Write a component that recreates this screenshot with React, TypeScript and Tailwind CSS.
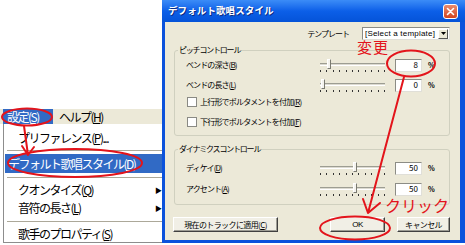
import React from "react";

const jp = "font-['Noto_Sans_CJK_JP','Noto_Sans',sans-serif]";

function Slider({ pos }: { pos: number }) {
  const ticks = Array.from({ length: 11 });
  return (
    <div className="relative w-[65px] h-[14px] shrink-0">
      <div className="absolute left-0 right-0 top-[5px] h-[3px] border-t border-[#9d9d92] border-b border-b-white bg-[#dcdad0]" />
      <div
        className="absolute top-[1px] w-[4px] h-[10px] bg-[#f4f3ee] border border-[#7a7a70] border-t-white border-l-white"
        style={{ left: pos }}
      />
      <div className="absolute left-0 right-0 bottom-0 h-[2px] flex justify-between">
        {ticks.map((_, i) => (
          <div key={i} className="w-px h-[2px] bg-[#333]" />
        ))}
      </div>
    </div>
  );
}

function Num({ v }: { v: string }) {
  return (
    <div className="ml-[10px] w-[27px] h-[13px] bg-white border border-[#8c8c85] border-b-[#e0dfd8] border-r-[#e0dfd8] flex items-center justify-end pr-[3px] text-[8px] leading-none">
      {v}
    </div>
  );
}

function Row({ label, pos, v }: { label: React.ReactNode; pos: number; v: string }) {
  return (
    <div className="flex items-center h-[14px] pl-[8px]">
      <div className="w-[134px] text-[8px] leading-none tracking-[-0.9px]">{label}</div>
      <Slider pos={pos} />
      <Num v={v} />
      <div className="ml-[6px] text-[7px] font-bold leading-none">%</div>
    </div>
  );
}

function Check({ label }: { label: React.ReactNode }) {
  return (
    <div className="flex items-center h-[12px] pl-[9px]">
      <div className="w-[10px] h-[10px] bg-white border border-[#8a8a84]" />
      <div className="ml-[3px] text-[8px] leading-none tracking-[-0.8px]">{label}</div>
    </div>
  );
}

function Btn({ w, children, ml }: { w: string; children: React.ReactNode; ml?: string }) {
  return (
    <div
      className={`${w} ${ml ?? ""} h-[15px] bg-[#f1efe6] border border-t-white border-l-white border-r-[#404040] border-b-[#404040] shadow-[inset_-1px_-1px_0_#9d9c94] flex items-center justify-center text-[8px] leading-none tracking-[-0.6px]`}
    >
      {children}
    </div>
  );
}

export default function App() {
  return (
    <div className={`relative w-[465px] h-[245px] bg-white overflow-hidden flex text-black ${jp}`}>
      {/* Left: menu */}
      <div className="w-[162px] shrink-0 flex flex-col pt-[109px]">
        <div className="h-[15px] bg-[#ECE9D8] flex items-stretch text-[12px] leading-none tracking-[-1.5px]">
          <div className="ml-[3px] w-[50px] bg-[#316AC5] text-white flex items-center pl-[4px]">
            設定(<u>S</u>)
          </div>
          <div className="ml-[6px] flex items-center">
            ヘルプ(<u>H</u>)
          </div>
        </div>
        <div className="ml-[3px] h-[119px] bg-white border-l border-b border-[#8d8d8d] flex flex-col pt-[6px] text-[12px] leading-none tracking-[-1.5px]">
          <div className="h-[16px] flex items-center pl-[14px]">
            プリファレンス(<u>P</u>)...
          </div>
          <div className="h-[8px] flex items-center">
            <div className="flex-1 h-px bg-[#aca899] ml-[3px]" />
          </div>
          <div className="h-[19px] ml-[1px] bg-[#316AC5] text-white flex items-center pl-[3px]">
            デフォルト歌唱スタイル(<u>D</u>)
          </div>
          <div className="h-[8px] flex items-center">
            <div className="flex-1 h-px bg-[#aca899] ml-[3px]" />
          </div>
          <div className="h-[18px] flex items-center pl-[14px]">
            <span className="w-[137px]">クオンタイズ(<u>Q</u>)</span>
            <span className="text-[7px] tracking-normal">▶</span>
          </div>
          <div className="h-[18px] flex items-center pl-[14px]">
            <span className="w-[137px]">音符の長さ(<u>L</u>)</span>
            <span className="text-[7px] tracking-normal">▶</span>
          </div>
          <div className="h-[8px] flex items-center">
            <div className="flex-1 h-px bg-[#aca899] ml-[3px]" />
          </div>
          <div className="h-[17px] flex items-center pl-[14px]">
            歌手のプロパティ(<u>S</u>)
          </div>
        </div>
      </div>

      {/* Dialog */}
      <div className="w-[303px] h-[243px] shrink-0 flex flex-col bg-[#0b52dc]">
        <div className="h-[22px] shrink-0 bg-gradient-to-b from-[#3b8cf7] via-[#0c5fe8] via-50% to-[#0553d8] flex items-center pl-[6px] pr-[7px]">
          <div className="flex-1 text-white text-[9.5px] font-bold tracking-[0.1px] leading-none [text-shadow:1px_1px_0_#0a2a80]">
            デフォルト歌唱スタイル
          </div>
          <div className="w-[15px] h-[15px] rounded-[3px] border border-white bg-gradient-to-b from-[#e98a6c] to-[#d2431c] flex items-center justify-center">
            <svg width="9" height="9" viewBox="0 0 9 9">
              <path d="M1.5 1.5 L7.5 7.5 M7.5 1.5 L1.5 7.5" stroke="white" strokeWidth="1.6" strokeLinecap="round" />
            </svg>
          </div>
        </div>
        <div className="flex-1 ml-[3px] mr-[5px] mb-[3px] bg-[#ECE9D8] flex flex-col">
          {/* template row */}
          <div className="mt-[5px] h-[13px] flex items-center justify-end pr-[10px]">
            <div className="text-[8px] leading-none tracking-[-1px]">テンプレート</div>
            <div className="ml-[13px] w-[88px] h-[13px] bg-white border border-[#8c8c85] border-b-[#e0dfd8] border-r-[#e0dfd8] flex items-center">
              <div className="flex-1 pl-[2px] text-[8px] leading-none font-['Liberation_Sans',sans-serif] tracking-[0.2px]">
                [Select a template]
              </div>
              <div className="w-[10px] h-[10px] mr-px bg-[#ECE9D8] border border-t-white border-l-white border-r-[#555] border-b-[#555] flex items-center justify-center">
                <svg width="5" height="3" viewBox="0 0 5 3">
                  <path d="M0 0 L5 0 L2.5 3 Z" fill="#000" />
                </svg>
              </div>
            </div>
          </div>

          {/* Pitch control group */}
          <fieldset className="ml-[9px] mr-[10px] mt-[5px] border border-[#d0d0bf] rounded-[3px] px-[3px] pb-[7px]">
            <legend className="px-[1px] text-[8px] leading-[10px] tracking-[-1.2px]">ピッチコントロール</legend>
            <div className="mt-[3px]">
              <Row label={<>ベンドの深さ(<u>B</u>)</>} pos={7} v="8" />
            </div>
            <div className="mt-[6px]">
              <Row label={<>ベンドの長さ(<u>L</u>)</>} pos={1} v="0" />
            </div>
            <div className="mt-[4px]">
              <Check label={<>上行形でポルタメントを付加(<u>R</u>)</>} />
            </div>
            <div className="mt-[8px]">
              <Check label={<>下行形でポルタメントを付加(<u>F</u>)</>} />
            </div>
          </fieldset>

          {/* Dynamics group */}
          <fieldset className="ml-[9px] mr-[10px] mt-[8px] border border-[#d0d0bf] rounded-[3px] px-[3px] pb-[8px]">
            <legend className="px-[1px] text-[8px] leading-[10px] tracking-[-1.2px]">ダイナミクスコントロール</legend>
            <div className="mt-[7px]">
              <Row label={<>ディケイ(<u>D</u>)</>} pos={33} v="50" />
            </div>
            <div className="mt-[7px]">
              <Row label={<>アクセント(<u>A</u>)</>} pos={33} v="50" />
            </div>
          </fieldset>

          {/* Buttons */}
          <div className="mt-[12px] flex items-center pl-[8px]">
            <Btn w="w-[105px]">現在のトラックに適用(<u>C</u>)</Btn>
            <Btn w="w-[55px]" ml="ml-[52px]">
              <span className="font-['Liberation_Sans',sans-serif]">OK</span>
            </Btn>
            <Btn w="w-[53px]" ml="ml-[12px]">キャンセル</Btn>
          </div>
        </div>
      </div>

      {/* Red annotations */}
      <svg className="absolute inset-0 pointer-events-none" width="465" height="245" viewBox="0 0 465 245">
        <g fill="none" stroke="#e3141b" strokeWidth="2" strokeLinecap="round" strokeLinejoin="round">
          <ellipse cx="27" cy="117" rx="25" ry="8.5" />
          <ellipse cx="75" cy="163" rx="67" ry="14" />
          <path d="M24 126 L28 155 M22 146 L28 155 L34 147" />
          <ellipse cx="411" cy="63.5" rx="24" ry="13" />
          <path d="M404 77 L368 213 M363 199 L368 213 L380 203" />
          <ellipse cx="355" cy="228" rx="35" ry="11.5" />
        </g>
      </svg>
      <div className="absolute left-[357px] top-[39px] text-[15px] leading-none tracking-[1px] text-[#e3141b]">
        変更
      </div>
      <div className="absolute left-[385px] top-[197px] text-[16px] leading-none tracking-[0px] text-[#e3141b]">
        クリック
      </div>
    </div>
  );
}
